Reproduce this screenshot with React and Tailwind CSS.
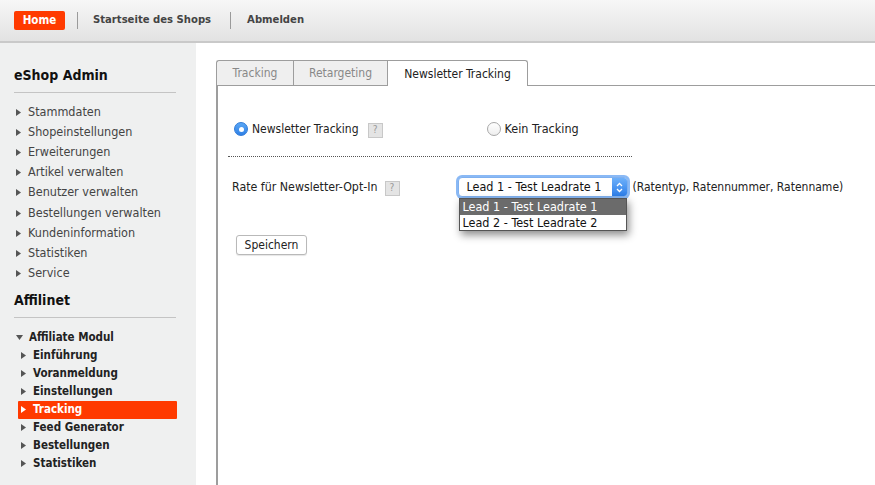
import React from "react";

const F = { fontFamily: '"DejaVu Sans Condensed", "DejaVu Sans", Verdana, sans-serif' };

function Arrow({ color = "#555" }) {
  return (
    <svg width="5" height="7" viewBox="0 0 5 7" className="shrink-0">
      <path d="M0 0 L5 3.5 L0 7 Z" fill={color} />
    </svg>
  );
}

function Help() {
  return (
    <span className="inline-flex items-center justify-center w-[15px] h-[15px] bg-[#e4e4e4] border border-[#c8c8c8] text-[10px] text-[#9a9a9a] leading-none">
      ?
    </span>
  );
}

const adminItems = [
  "Stammdaten",
  "Shopeinstellungen",
  "Erweiterungen",
  "Artikel verwalten",
  "Benutzer verwalten",
  "Bestellungen verwalten",
  "Kundeninformation",
  "Statistiken",
  "Service",
];

const affItems = [
  "Einführung",
  "Voranmeldung",
  "Einstellungen",
  "Tracking",
  "Feed Generator",
  "Bestellungen",
  "Statistiken",
];

export default function App() {
  return (
    <div style={F} className="w-[875px] h-[485px] overflow-hidden bg-white text-[12px] text-[#222]">
      {/* header */}
      <div className="h-[43px] flex items-center bg-gradient-to-b from-[#f7f7f7] to-[#e2e2e2] border-b-2 border-[#c9c9c9] pl-[14px]">
        <div className="h-[19px] w-[51px] bg-[#ff3a00] rounded-[2px] flex items-center justify-center text-white font-bold text-[11.5px]">
          Home
        </div>
        <div className="w-px h-[17px] bg-[#9a9a9a] ml-[12px]" />
        <div className="ml-[15px] font-bold text-[11.2px] text-[#444]">Startseite des Shops</div>
        <div className="w-px h-[17px] bg-[#9a9a9a] ml-[19px]" />
        <div className="ml-[16px] font-bold text-[11.2px] text-[#444]">Abmelden</div>
      </div>

      <div className="flex h-[442px]">
        {/* sidebar */}
        <div className="w-[196px] shrink-0 bg-[#eff0f0] pl-[14px] pr-[20px] pt-[22px]">
          <div className="text-[14px] font-bold text-[#111] leading-[20px]">eShop Admin</div>
          <div className="h-px bg-[#c4c4c4] mt-[7px] w-[162px]" />
          <div className="mt-[9px] text-[12.5px]">
            {adminItems.map((t) => (
              <div key={t} className="flex items-center h-[20.2px] text-[#444]">
                <span className="ml-[2px] mr-[7px]"><Arrow color="#555" /></span>
                {t}
              </div>
            ))}
          </div>
          <div className="text-[14px] font-bold text-[#111] leading-[20px] mt-[6px]">Affilinet</div>
          <div className="h-px bg-[#c4c4c4] mt-[7px] w-[162px]" />
          <div className="mt-[11px] flex items-center h-[18px] font-bold text-[11.5px] text-[#222]">
            <svg width="7" height="5" viewBox="0 0 7 5" className="ml-[2px] mr-[6px]">
              <path d="M0 0 L7 0 L3.5 5 Z" fill="#555" />
            </svg>
            Affiliate Modul
          </div>
          {affItems.map((t) => {
            const active = t === "Tracking";
            return (
              <div
                key={t}
                className={
                  "flex items-center h-[18px] ml-[4px] w-[159px] font-bold text-[11.5px] " +
                  (active ? "bg-[#ff3a00] text-white rounded-[1px]" : "text-[#222]")
                }
              >
                <span className="ml-[3px] mr-[7px]"><Arrow color={active ? "#fff" : "#555"} /></span>
                {t}
              </div>
            );
          })}
        </div>

        {/* main */}
        <div className="flex-1 pl-[20px] pt-[17px] flex flex-col">
          <div className="flex h-[26px]">
            <div className="w-[77px] flex items-center justify-center bg-[#efefef] border border-[#9d9d9d] border-r-0 rounded-tl-[3px] text-[#888]">
              Tracking
            </div>
            <div className="w-[95px] flex items-center justify-center bg-[#efefef] border border-[#9d9d9d] text-[#888]">
              Retargeting
            </div>
            <div className="w-[140px] flex items-center justify-center bg-white border border-[#9d9d9d] border-l-0 border-b-0 rounded-tr-[3px] text-[#222]">
              Newsletter Tracking
            </div>
            <div className="flex-1 border-b border-[#9d9d9d]" />
          </div>
          <div className="flex-1 border-l-2 border-[#9d9d9d] relative">
            {/* radio row */}
            <div className="flex items-center h-[16px] mt-[35px] pl-[16px]">
              <span className="w-[14px] h-[14px] rounded-full bg-gradient-to-b from-[#5aa7f5] to-[#2f80e6] border border-[#2f7ad8] flex items-center justify-center">
                <span className="w-[5px] h-[5px] rounded-full bg-white" />
              </span>
              <span className="ml-[4px] text-[#222]">Newsletter Tracking</span>
              <span className="ml-[9px]"><Help /></span>
              <span className="ml-[104px] w-[14px] h-[14px] rounded-full bg-gradient-to-b from-white to-[#eee] border border-[#a8a8a8]" />
              <span className="ml-[4px] text-[#222] text-[12.5px]">Kein Tracking</span>
            </div>
            <div className="ml-[10px] mt-[19px] w-[404px] border-t border-dotted border-[#555]" />
            {/* rate row */}
            <div className="flex items-center h-[20px] mt-[20px] pl-[14px]">
              <span className="text-[#222] text-[12.3px]">Rate für Newsletter-Opt-In</span>
              <span className="ml-[7px]"><Help /></span>
              <div className="ml-[58px] w-[170px] h-[20px] rounded-[4px] bg-white border border-[#7fb0ef] shadow-[0_0_0_2px_#8ab9f5] flex items-center relative">
                <span className="pl-[8px] text-[#111] text-[12.5px]">Lead 1 - Test Leadrate 1</span>
                <span className="absolute right-0 top-0 bottom-0 w-[15px] rounded-r-[3px] bg-gradient-to-b from-[#6db0fa] to-[#2c7ee8] flex items-center justify-center">
                  <svg width="7" height="11" viewBox="0 0 7 11">
                    <path d="M1 4 L3.5 1.5 L6 4 M1 7 L3.5 9.5 L6 7" stroke="white" strokeWidth="1.3" fill="none" />
                  </svg>
                </span>
                <div className="absolute left-0 top-[20px] w-[168px] bg-white border border-[#555] shadow-[2px_4px_8px_rgba(0,0,0,0.45)] z-10 text-[12.5px]">
                  <div className="h-[16px] leading-[16px] bg-[#6b6b6b] text-white pl-[3px]">Lead 1 - Test Leadrate 1</div>
                  <div className="h-[15px] leading-[15px] text-[#111] pl-[3px]">Lead 2 - Test Leadrate 2</div>
                </div>
              </div>
              <span className="ml-[5px] text-[#222]">(Ratentyp, Ratennummer, Ratenname)</span>
            </div>
            <div className="mt-[38px] ml-[18px]">
              <button className="h-[20px] w-[71px] bg-white border border-[#b9b9b9] rounded-[3px] shadow-[0_1px_1px_rgba(0,0,0,0.1)] text-[#222] text-[12px]" style={F}>
                Speichern
              </button>
            </div>
          </div>
        </div>
      </div>
    </div>
  );
}
